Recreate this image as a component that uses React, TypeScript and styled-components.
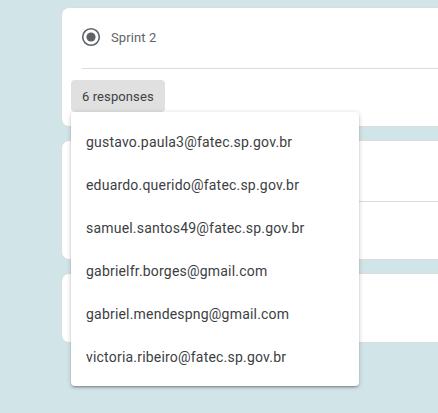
import React from "react";
import styled, { createGlobalStyle } from "styled-components";

const Global = createGlobalStyle`
  html, body { margin: 0; padding: 0; }
  body {
    background: #d1e5e9;
    overflow: hidden;
    font-family: Roboto, "Liberation Sans", Arial, sans-serif;
    width: 438px;
    height: 413px;
  }
`;

const Page = styled.div`
  display: flex;
  flex-direction: column;
  gap: 13px;
  padding: 7px 0 0 61px;
`;

const Card = styled.div<{ $h: number; $front?: boolean }>`
  position: relative;
  z-index: ${(p) => (p.$front ? 2 : 1)};
  box-sizing: border-box;
  width: 640px;
  height: ${(p) => p.$h}px;
  background: #fff;
  border: 1px solid #dadce0;
  border-radius: 8px;
  display: flex;
  flex-direction: column;
  padding-top: 9px;
`;

const OptionRow = styled.div`
  display: flex;
  align-items: center;
  height: 40px;
  padding-left: 19px;
  gap: 10px;
`;

const OptionLabel = styled.span`
  font-size: 13px;
  color: #5f6368;
  letter-spacing: 0.1px;
`;

const Divider = styled.div`
  height: 1px;
  background: #dadce0;
  margin: 11px 0 0 20px;
`;

const ChipArea = styled.div`
  position: relative;
  margin: 11px 0 0 9px;
  align-self: flex-start;
`;

const Chip = styled.div`
  height: 32px;
  box-sizing: border-box;
  padding: 0 11px;
  display: flex;
  align-items: center;
  background: #e0e0e0;
  border-radius: 4px;
  font-size: 13px;
  color: #3c4043;
  letter-spacing: 0.1px;
`;

const Menu = styled.ul`
  position: absolute;
  top: 100%;
  left: 0;
  z-index: 10;
  width: 288px;
  margin: 0;
  padding: 8px 0;
  list-style: none;
  background: #fff;
  border-radius: 4px;
  box-shadow: 0 2px 2px rgba(0, 0, 0, 0.14), 0 3px 1px -2px rgba(0, 0, 0, 0.12),
    0 1px 5px rgba(0, 0, 0, 0.2);
`;

const MenuItem = styled.li`
  height: 43px;
  display: flex;
  align-items: center;
  padding-left: 15px;
  font-size: 14px;
  color: #3c4043;
  letter-spacing: 0.2px;
`;

const Radio = ({ checked }: { checked: boolean }) => (
  <svg width="20" height="20" viewBox="0 0 20 20">
    <circle cx="10" cy="10" r="8.3" fill="none" stroke="#5f6368" strokeWidth="1.6" />
    {checked && <circle cx="10" cy="10" r="4.6" fill="#5f6368" />}
  </svg>
);

const emails = [
  "gustavo.paula3@fatec.sp.gov.br",
  "eduardo.querido@fatec.sp.gov.br",
  "samuel.santos49@fatec.sp.gov.br",
  "gabrielfr.borges@gmail.com",
  "gabriel.mendespng@gmail.com",
  "victoria.ribeiro@fatec.sp.gov.br",
];

export default function App() {
  return (
    <>
      <Global />
      <Page>
        <Card $h={120} $front>
          <OptionRow>
            <Radio checked />
            <OptionLabel>Sprint 2</OptionLabel>
          </OptionRow>
          <Divider />
          <ChipArea>
            <Chip>6 responses</Chip>
            <Menu>
              {emails.map((e) => (
                <MenuItem key={e}>{e}</MenuItem>
              ))}
            </Menu>
          </ChipArea>
        </Card>
        <Card $h={120}>
          <OptionRow>
            <Radio checked={false} />
          </OptionRow>
          <Divider />
        </Card>
        <Card $h={70}>
          <OptionRow>
            <Radio checked={false} />
          </OptionRow>
        </Card>
      </Page>
    </>
  );
}
